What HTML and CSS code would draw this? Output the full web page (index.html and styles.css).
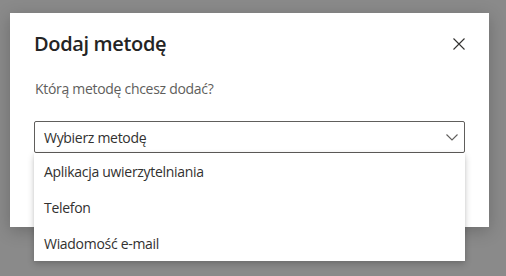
FILE: index.html
```html
<!DOCTYPE html>
<html lang="pl">
<head>
  <meta charset="UTF-8" />
  <meta name="viewport" content="width=device-width, initial-scale=1.0" />
  <title>Dodaj metodę</title>
  <link rel="stylesheet" href="styles.css">
</head>
<body>
  <div class="modal">
    <div class="modal-header">
      <h2>Dodaj metodę</h2>
      <button class="close-btn" aria-label="Zamknij">
        <svg width="12" height="12" viewBox="0 0 12 12">
          <path d="M0.5 0.5 L11.5 11.5 M11.5 0.5 L0.5 11.5" stroke="#323130" stroke-width="1.1" fill="none" />
        </svg>
      </button>
    </div>
    <p class="question">Którą metodę chcesz dodać?</p>

    <div class="select-wrap">
      <div class="select">
        <span>Wybierz metodę</span>
        <svg class="chevron" width="12" height="7" viewBox="0 0 12 7">
          <path d="M0.5 0.5 L6 6 L11.5 0.5" stroke="#605e5c" stroke-width="1.1" fill="none" />
        </svg>
      </div>
      <ul class="options">
        <li>Aplikacja uwierzytelniania</li>
        <li>Telefon</li>
        <li>Wiadomość e-mail</li>
      </ul>
    </div>
  </div>
</body>
</html>
```

FILE: styles.css
```css
body {
  margin: 0;
  padding: 13px 0 0 10px;
  height: 276px;
  box-sizing: border-box;
  overflow: hidden;
  background-color: #8a8a8a;
  font-family: "Open Sans", "Noto Sans", Arial, sans-serif;
  color: #323130;
}
.modal {
  width: 479px;
  height: 214px;
  box-sizing: border-box;
  padding: 0 24px;
  background-color: #ffffff;
  box-shadow: 0 4px 16px rgba(0, 0, 0, 0.22);
}
.modal-header {
  display: flex;
  justify-content: space-between;
  align-items: center;
  padding-top: 17px;
}
.modal-header h2 {
  margin: 0 0 0 0;
  font-size: 20px;
  line-height: 28px;
  font-weight: 600;
  letter-spacing: -0.35px;
  color: #242424;
}
.close-btn {
  background: none;
  border: none;
  padding: 0;
  width: 12px;
  height: 12px;
  display: flex;
  cursor: pointer;
}
.question {
  margin: 21px 0 0 1px;
  font-size: 14px;
  line-height: 20px;
  letter-spacing: -0.3px;
  color: #605e5c;
}
.select-wrap {
  position: relative;
  margin-top: 22px;
}
.select {
  height: 32px;
  box-sizing: border-box;
  border: 1px solid #605e5c;
  border-radius: 2px;
  padding: 0 6px 0 9px;
  display: flex;
  align-items: center;
  justify-content: space-between;
  font-size: 14px;
  letter-spacing: -0.3px;
}
.options {
  position: absolute;
  top: 32px;
  left: 0;
  right: 0;
  margin: 0;
  padding: 0;
  list-style: none;
  background-color: #ffffff;
  box-shadow: 0 3px 7px rgba(0, 0, 0, 0.2), 0 0 3px rgba(0, 0, 0, 0.08);
}
.options li {
  height: 36px;
  line-height: 36px;
  padding: 1px 10px 0;
  box-sizing: border-box;
  font-size: 14px;
  letter-spacing: -0.3px;
  color: #323130;
}
```
